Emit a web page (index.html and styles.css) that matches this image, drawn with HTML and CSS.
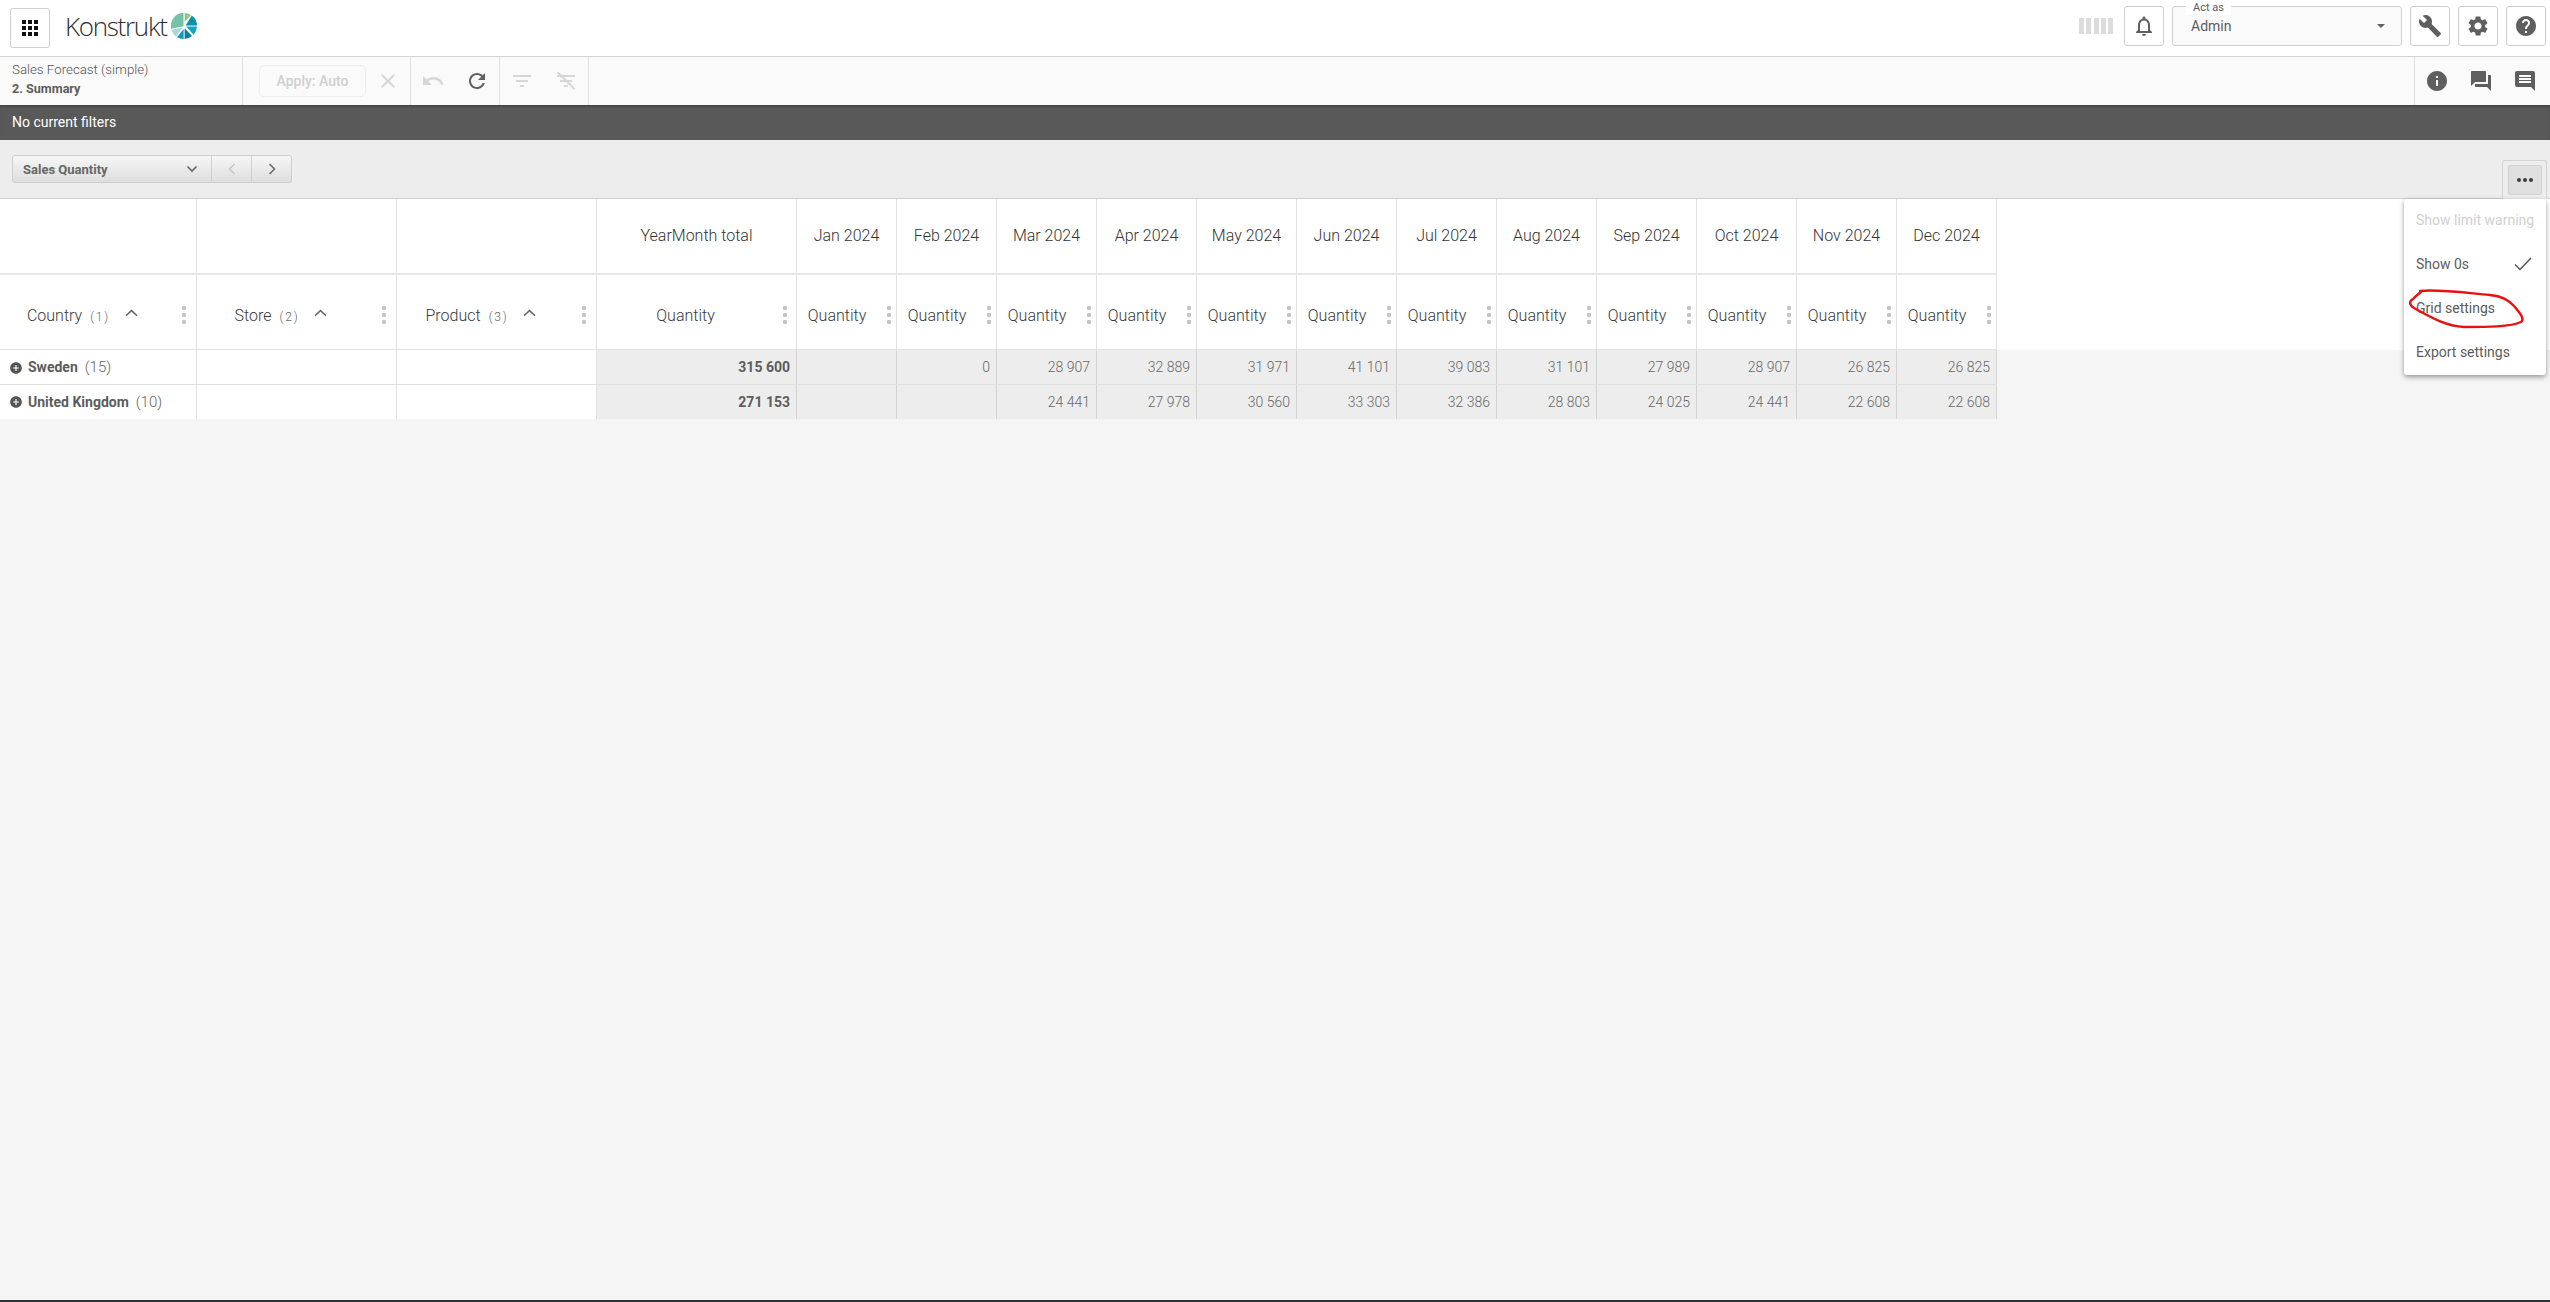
FILE: index.html
```html
<!DOCTYPE html>
<html lang="en">
<head>
<meta charset="utf-8">
<title>Konstrukt</title>
<link rel="stylesheet" href="styles.css">
</head>
<body>
<svg class="defs" aria-hidden="true">
  <symbol id="i-apps" viewBox="0 0 24 24"><path d="M4 8h4V4H4v4zm6 12h4v-4h-4v4zm-6 0h4v-4H4v4zm0-6h4v-4H4v4zm6 0h4v-4h-4v4zm6-10v4h4V4h-4zm-6 4h4V4h-4v4zm6 6h4v-4h-4v4zm0 6h4v-4h-4v4z"/></symbol>
  <symbol id="i-bell" viewBox="0 0 24 24"><path d="M12 22c1.1 0 2-.9 2-2h-4c0 1.1.9 2 2 2zm6-6v-5c0-3.07-1.63-5.64-4.5-6.32V4c0-.83-.67-1.5-1.5-1.5s-1.5.67-1.5 1.5v.68C7.64 5.36 6 7.92 6 11v5l-2 2v1h16v-1l-2-2zm-2 1H8v-6c0-2.48 1.51-4.5 4-4.5s4 2.02 4 4.5v6z"/></symbol>
  <symbol id="i-build" viewBox="0 0 24 24"><path d="M22.7 19l-9.1-9.1c.9-2.3.4-5-1.5-6.9-2-2-5-2.4-7.4-1.3L9 6 6 9 1.6 4.7C.4 7.1.9 10.1 2.9 12.1c1.9 1.9 4.6 2.4 6.9 1.5l9.1 9.1c.4.4 1 .4 1.4 0l2.3-2.3c.5-.4.5-1.1.1-1.4z"/></symbol>
  <symbol id="i-gear" viewBox="0 0 24 24"><path d="M19.14 12.94c.04-.3.06-.61.06-.94 0-.32-.02-.64-.07-.94l2.03-1.58c.18-.14.23-.41.12-.61l-1.92-3.32c-.12-.22-.37-.29-.59-.22l-2.39.96c-.5-.38-1.03-.7-1.62-.94l-.36-2.54c-.04-.24-.24-.41-.48-.41h-3.84c-.24 0-.43.17-.47.41l-.36 2.54c-.59.24-1.13.57-1.62.94l-2.39-.96c-.22-.08-.47 0-.59.22L2.74 8.87c-.12.21-.08.47.12.61l2.03 1.58c-.05.3-.09.63-.09.94s.02.64.07.94l-2.03 1.58c-.18.14-.23.41-.12.61l1.92 3.32c.12.22.37.29.59.22l2.39-.96c.5.38 1.03.7 1.62.94l.36 2.54c.05.24.24.41.48.41h3.84c.24 0 .44-.17.47-.41l.36-2.54c.59-.24 1.13-.56 1.62-.94l2.39.96c.22.08.47 0 .59-.22l1.92-3.32c.12-.22.07-.47-.12-.61l-2.01-1.58zM12 15.6c-1.98 0-3.6-1.62-3.6-3.6s1.62-3.6 3.6-3.6 3.6 1.62 3.6 3.6-1.62 3.6-3.6 3.6z"/></symbol>
  <symbol id="i-help" viewBox="0 0 24 24"><path d="M12 2C6.48 2 2 6.48 2 12s4.48 10 10 10 10-4.48 10-10S17.52 2 12 2zm1 17h-2v-2h2v2zm2.07-7.75l-.9.92C13.45 12.9 13 13.5 13 15h-2v-.5c0-1.1.45-2.1 1.17-2.83l1.24-1.26c.37-.36.59-.86.59-1.41 0-1.1-.9-2-2-2s-2 .9-2 2H8c0-2.21 1.79-4 4-4s4 1.79 4 4c0 .88-.36 1.68-.93 2.25z"/></symbol>
  <symbol id="i-info" viewBox="0 0 24 24"><path d="M12 2C6.48 2 2 6.48 2 12s4.48 10 10 10 10-4.48 10-10S17.52 2 12 2zm1 15h-2v-6h2v6zm0-8h-2V7h2v2z"/></symbol>
  <symbol id="i-forum" viewBox="0 0 24 24"><path d="M21 6h-2v9H6v2c0 .55.45 1 1 1h11l4 4V7c0-.55-.45-1-1-1zm-4 6V3c0-.55-.45-1-1-1H3c-.55 0-1 .45-1 1v14l4-4h10c.55 0 1-.45 1-1z"/></symbol>
  <symbol id="i-chat" viewBox="0 0 24 24"><path d="M21.99 4c0-1.1-.89-2-1.99-2H4c-1.1 0-2 .9-2 2v12c0 1.1.9 2 2 2h14l4 4-.01-18zM18 14H6v-2h12v2zm0-3H6V9h12v2zm0-3H6V6h12v2z"/></symbol>
  <symbol id="i-close" viewBox="0 0 24 24"><path d="M19 6.41L17.59 5 12 10.59 6.41 5 5 6.41 10.59 12 5 17.59 6.41 19 12 13.41 17.59 19 19 17.59 13.41 12z"/></symbol>
  <symbol id="i-undo" viewBox="0 0 24 24"><path d="M12.5 8c-2.65 0-5.05.99-6.9 2.6L2 7v9h9l-3.62-3.62c1.39-1.16 3.16-1.88 5.12-1.88 3.54 0 6.55 2.31 7.6 5.5l2.37-.78C21.08 11.03 17.15 8 12.5 8z"/></symbol>
  <symbol id="i-refresh" viewBox="0 0 24 24"><path d="M17.65 6.35C16.2 4.9 14.21 4 12 4c-4.42 0-7.99 3.58-7.99 8s3.57 8 7.99 8c3.73 0 6.84-2.55 7.73-6h-2.08c-.82 2.33-3.04 4-5.65 4-3.31 0-6-2.69-6-6s2.69-6 6-6c1.66 0 3.14.69 4.22 1.78L13 11h7V4l-2.35 2.35z"/></symbol>
  <symbol id="i-filter" viewBox="0 0 24 24"><path d="M10 18h4v-2h-4v2zM3 6v2h18V6H3zm3 7h12v-2H6v2z"/></symbol>
  <symbol id="i-filter-off" viewBox="0 0 24 24"><path d="M10 18h4v-2h-4v2zM3 6v2h18V6H3zm3 7h12v-2H6v2z"/><path d="M4.4 2.6l17 17-1.4 1.4-17-17z"/></symbol>
  <symbol id="i-plus" viewBox="0 0 24 24"><path d="M12 2C6.48 2 2 6.48 2 12s4.48 10 10 10 10-4.48 10-10S17.52 2 12 2zm5 11h-4v4h-2v-4H7v-2h4V7h2v4h4v2z"/></symbol>
  <symbol id="i-dots" viewBox="0 0 6 20"><circle cx="3" cy="3" r="2.2"/><circle cx="3" cy="10" r="2.2"/><circle cx="3" cy="17" r="2.2"/></symbol>
  <symbol id="i-up" viewBox="0 0 14 8"><path d="M1 7l6-5.6L13 7" fill="none" stroke="currentColor" stroke-width="1.6"/></symbol>
</svg>

<header class="topbar">
  <button class="square-btn apps-btn"><svg class="icon icon-black"><use href="#i-apps"/></svg></button>
  <div class="logo">
    <span class="logo-text">Konstrukt</span>
    <svg class="logo-pie" viewBox="0 0 26 26">
      <path fill="#74c3a9" d="M12.5 0A13 13 0 0 0 .1 15.8L12.5 13.2z"/>
      <path fill="#a9d9e0" d="M.4 16.8L11.8 14.6 5 23.6A13 13 0 0 1 .4 16.8z"/>
      <path fill="#8ccb7c" d="M13.6 0A13 13 0 0 1 20 2L13.6 9z"/>
      <path fill="#0e8ea8" d="M20.8 2.6A13 13 0 0 1 26 12.6H14.6z"/>
      <path fill="#12a8c4" d="M26 13.6A13 13 0 0 1 22.6 21.8L15.2 13.6z"/>
      <path fill="#0e7f98" d="M13.6 15.2L21 23A13 13 0 0 1 13.6 26z"/>
      <path fill="#1098b4" d="M12.6 16V26A13 13 0 0 1 6 24.2z"/>
    </svg>
  </div>
  <div class="top-right">
    <div class="bars"><i></i><i></i><i></i><i></i><i></i></div>
    <button class="square-btn"><svg class="icon"><use href="#i-bell"/></svg></button>
    <div class="act-as">
      <span class="act-legend">Act as</span>
      <span class="act-value">Admin</span>
      <span class="act-caret"></span>
    </div>
    <button class="square-btn"><svg class="icon"><use href="#i-build"/></svg></button>
    <button class="square-btn"><svg class="icon"><use href="#i-gear"/></svg></button>
    <button class="square-btn"><svg class="icon"><use href="#i-help"/></svg></button>
  </div>
</header>

<nav class="toolbar">
  <div class="tool-title">
    <div class="title-main">Sales Forecast (simple)</div>
    <div class="title-sub">2. Summary</div>
  </div>
  <div class="tool-group tool-apply">
    <button class="apply-btn">Apply: Auto</button>
    <svg class="icon icon-off"><use href="#i-close"/></svg>
  </div>
  <div class="tool-group">
    <svg class="icon icon-off"><use href="#i-undo"/></svg>
    <svg class="icon"><use href="#i-refresh"/></svg>
  </div>
  <div class="tool-group">
    <svg class="icon icon-off"><use href="#i-filter"/></svg>
    <svg class="icon icon-off"><use href="#i-filter-off"/></svg>
  </div>
  <div class="tool-group tool-end">
    <svg class="icon"><use href="#i-info"/></svg>
    <svg class="icon"><use href="#i-forum"/></svg>
    <svg class="icon"><use href="#i-chat"/></svg>
  </div>
</nav>

<div class="filterbar">No current filters</div>

<div class="band">
  <div class="pager">
    <div class="pager-select"><span>Sales Quantity</span><svg class="chev" viewBox="0 0 12 8"><path d="M1.5 1.5L6 6l4.5-4.5" fill="none" stroke="currentColor" stroke-width="1.6"/></svg></div>
    <div class="pager-btn pager-off"><svg class="chev-side" viewBox="0 0 8 12"><path d="M6.5 1L1.5 6l5 5" fill="none" stroke="currentColor" stroke-width="1.5"/></svg></div>
    <div class="pager-btn"><svg class="chev-side" viewBox="0 0 8 12"><path d="M1.5 1l5 5-5 5" fill="none" stroke="currentColor" stroke-width="1.5"/></svg></div>
  </div>
  <div class="more-box"><button class="more-btn"><i></i><i></i><i></i></button></div>
</div>

<main class="table-area">
  <div class="thead">
    <div class="tr tr-top">
      <div class="th dim"></div><div class="th"></div><div class="th"></div>
      <div class="th col-title">YearMonth total</div>
      <div class="th col-title">Jan 2024</div><div class="th col-title">Feb 2024</div><div class="th col-title">Mar 2024</div><div class="th col-title">Apr 2024</div>
      <div class="th col-title">May 2024</div><div class="th col-title">Jun 2024</div><div class="th col-title">Jul 2024</div><div class="th col-title">Aug 2024</div>
      <div class="th col-title">Sep 2024</div><div class="th col-title">Oct 2024</div><div class="th col-title">Nov 2024</div><div class="th col-title">Dec 2024</div>
    </div>
    <div class="tr tr-sub">
      <div class="th col-head"><span class="label dim-label">Country<small>(1)</small><svg class="sort"><use href="#i-up"/></svg></span><svg class="dots dots-dim"><use href="#i-dots"/></svg></div>
      <div class="th col-head"><span class="label dim-label">Store<small>(2)</small><svg class="sort"><use href="#i-up"/></svg></span><svg class="dots dots-dim"><use href="#i-dots"/></svg></div>
      <div class="th col-head"><span class="label dim-label">Product<small>(3)</small><svg class="sort"><use href="#i-up"/></svg></span><svg class="dots dots-dim"><use href="#i-dots"/></svg></div>
      <div class="th col-head"><span class="label">Quantity</span><svg class="dots dots-total"><use href="#i-dots"/></svg></div>
      <div class="th col-head"><span class="label month-label">Quantity</span><svg class="dots"><use href="#i-dots"/></svg></div>
      <div class="th col-head"><span class="label month-label">Quantity</span><svg class="dots"><use href="#i-dots"/></svg></div>
      <div class="th col-head"><span class="label month-label">Quantity</span><svg class="dots"><use href="#i-dots"/></svg></div>
      <div class="th col-head"><span class="label month-label">Quantity</span><svg class="dots"><use href="#i-dots"/></svg></div>
      <div class="th col-head"><span class="label month-label">Quantity</span><svg class="dots"><use href="#i-dots"/></svg></div>
      <div class="th col-head"><span class="label month-label">Quantity</span><svg class="dots"><use href="#i-dots"/></svg></div>
      <div class="th col-head"><span class="label month-label">Quantity</span><svg class="dots"><use href="#i-dots"/></svg></div>
      <div class="th col-head"><span class="label month-label">Quantity</span><svg class="dots"><use href="#i-dots"/></svg></div>
      <div class="th col-head"><span class="label month-label">Quantity</span><svg class="dots"><use href="#i-dots"/></svg></div>
      <div class="th col-head"><span class="label month-label">Quantity</span><svg class="dots"><use href="#i-dots"/></svg></div>
      <div class="th col-head"><span class="label month-label">Quantity</span><svg class="dots"><use href="#i-dots"/></svg></div>
      <div class="th col-head"><span class="label month-label">Quantity</span><svg class="dots"><use href="#i-dots"/></svg></div>
    </div>
  </div>
  <div class="tbody">
    <div class="tr tr-data">
      <div class="td td-dim"><svg class="plus"><use href="#i-plus"/></svg><b>Sweden</b><span class="n">(15)</span></div><div class="td td-dim"></div><div class="td td-dim"></div>
      <div class="td td-total">315 600</div><div class="td"></div><div class="td">0</div><div class="td">28 907</div><div class="td">32 889</div><div class="td">31 971</div><div class="td">41 101</div><div class="td">39 083</div><div class="td">31 101</div><div class="td">27 989</div><div class="td">28 907</div><div class="td">26 825</div><div class="td">26 825</div>
    </div>
    <div class="tr tr-data tr-last">
      <div class="td td-dim"><svg class="plus"><use href="#i-plus"/></svg><b>United Kingdom</b><span class="n">(10)</span></div><div class="td td-dim"></div><div class="td td-dim"></div>
      <div class="td td-total">271 153</div><div class="td"></div><div class="td"></div><div class="td">24 441</div><div class="td">27 978</div><div class="td">30 560</div><div class="td">33 303</div><div class="td">32 386</div><div class="td">28 803</div><div class="td">24 025</div><div class="td">24 441</div><div class="td">22 608</div><div class="td">22 608</div>
    </div>
  </div>

  <ul class="menu">
    <li class="menu-off">Show limit warning</li>
    <li class="menu-check">Show 0s<svg class="check" viewBox="0 0 18 14"><path d="M1 7.5l5 5L17 1" fill="none" stroke="currentColor" stroke-width="1.5"/></svg></li>
    <li>Grid settings</li>
    <li>Export settings</li>
  </ul>
  <svg class="scribble" viewBox="0 0 120 50"><path d="M14 3C30 1 52 4 84 7C96 8 102 12 108 18C114 25 119 31 115 34C105 39 80 39 58 39C40 38 26 30 8 20C3 17 3 13 7 11C10 8 12 6 15 4" fill="none" stroke="#e81010" stroke-width="2.4" stroke-linecap="round"/></svg>
</main>

<footer class="edge"></footer>
</body>
</html>
```

FILE: styles.css
```css
* { box-sizing: border-box; }
html, body { height: 100%; }
body {
  margin: 0;
  display: flex;
  flex-direction: column;
  height: 100vh;
  overflow: hidden;
  background: #f5f5f5;
  color: #5c5c5c;
  font-family: Roboto, "Liberation Sans", sans-serif;
  font-size: 13px;
}
button { font-family: inherit; padding: 0; }
.defs { position: absolute; width: 0; height: 0; }
.icon { width: 24px; height: 24px; fill: #5f5f5f; flex: none; display: block; }
.icon-black { fill: #111; }
.icon-off { fill: #d6d6d6; }

/* top bar */
.topbar {
  height: 57px;
  flex: none;
  display: flex;
  align-items: flex-start;
  padding: 6px 4px 0 10px;
  background: #fff;
  border-bottom: 1px solid #d2d2d2;
}
.square-btn {
  width: 40px;
  height: 40px;
  display: flex;
  align-items: center;
  justify-content: center;
  background: #fff;
  border: 1px solid #d0d0d0;
  border-radius: 3px;
}
.apps-btn { margin-top: 2px; }
.logo { display: flex; align-items: center; gap: 4px; margin: 7px 0 0 15px; height: 26px; }
.logo-text {
  font-family: "Open Sans", sans-serif;
  font-weight: 300;
  font-size: 26px;
  line-height: 26px;
  letter-spacing: -1.3px;
  color: #2e2e2e;
}
.logo-pie { width: 26px; height: 26px; display: block; }
.top-right { margin-left: auto; display: flex; align-items: flex-start; gap: 8px; }
.bars { display: flex; gap: 2.25px; margin: 12px 3px 0 0; }
.bars i { width: 5px; height: 16px; background: #dcdcdc; display: block; }
.act-as {
  position: relative;
  width: 230px;
  height: 40px;
  display: flex;
  align-items: center;
  justify-content: space-between;
  padding: 0 16px 0 18px;
  background: #fafafa;
  border: 1px solid #d0d0d0;
  border-radius: 3px;
}
.act-legend {
  position: absolute;
  left: 13px;
  top: -6px;
  padding: 0 7px 0 7px;
  height: 14px;
  line-height: 14px;
  font-size: 11px;
  background: #fff;
  color: #5c5c5c;
}
.act-value { font-size: 14px; color: #5c5c5c; }
.act-caret {
  width: 0;
  height: 0;
  border-left: 4px solid transparent;
  border-right: 4px solid transparent;
  border-top: 4px solid #5f5f5f;
}

/* tool bar */
.toolbar {
  height: 48px;
  flex: none;
  display: flex;
  background: #fafafa;
}
.tool-title {
  width: 243px;
  padding: 3px 0 0 12px;
  border-right: 1px solid #e0e0e0;
  line-height: 19px;
  font-size: 13.3px;
  font-weight: 300;
  color: #555;
}
.title-sub { font-weight: 700; color: #5c5c5c; font-size: 12.6px; }
.tool-group {
  display: flex;
  align-items: center;
  gap: 20px;
  padding: 0 10px;
  border-right: 1px solid #e0e0e0;
}
.tool-apply { padding: 0 10px 0 16px; gap: 10px; }
.tool-end { margin-left: auto; border-right: 0; border-left: 1px solid #e0e0e0; padding: 0 13px 0 10px; }
.apply-btn {
  width: 107px;
  height: 32px;
  background: #fafafa;
  border: 1px solid #eee;
  border-radius: 5px;
  font-size: 14px;
  font-weight: 500;
  color: #cfcfcf;
}

/* filter strip */
.filterbar {
  height: 35px;
  flex: none;
  display: flex;
  align-items: center;
  padding: 0 0 2px 12px;
  background: #595959;
  box-shadow: inset 0 3px 3px -2px rgba(0, 0, 0, .35);
  color: #fff;
  font-size: 14px;
}

/* grid controls */
.band {
  height: 59px;
  flex: none;
  display: flex;
  justify-content: space-between;
  padding: 15px 3px 0 12px;
  background: #ededed;
  border-bottom: 1px solid #cfcfcf;
}
.pager { display: flex; height: 28px; }
.pager-select, .pager-btn {
  display: flex;
  align-items: center;
  background: linear-gradient(#f6f6f6, #dedede);
  border: 1px solid #cfcfcf;
  color: #666;
}
.pager-select {
  width: 200px;
  justify-content: space-between;
  padding: 0 13px 0 10px;
  border-radius: 3px 0 0 3px;
  font-size: 13px;
  font-weight: 700;
}
.chev { width: 12px; height: 8px; }
.pager-btn { width: 40px; justify-content: center; border-left: 0; }
.pager-btn:last-child { border-radius: 0 3px 3px 0; }
.pager-off { color: #c4c4c4; }
.chev-side { width: 8px; height: 12px; }
.more-box {
  width: 45px;
  height: 39px;
  margin-top: 5px;
  padding: 4px 0 0 5px;
  background: #ededed;
  border: 1px solid #d4d4d4;
  border-bottom: 0;
  border-radius: 3px 3px 0 0;
}
.more-btn {
  width: 34px;
  height: 30px;
  display: flex;
  align-items: center;
  justify-content: center;
  gap: 2px;
  background: #e0e0e0;
  border: 1px solid #d2d2d2;
  border-radius: 2px;
}
.more-btn i { width: 4px; height: 4px; border-radius: 50%; background: #3b3b3b; }

/* table */
.table-area { position: relative; flex: 1; }
.thead { background: #fff; }
.tr {
  display: grid;
  grid-template-columns: 197px 200px 200px 200px repeat(12, 100px);
  width: 1997px;
}
.th { border-right: 1px solid #e2e2e2; }
.tr-top { height: 76px; border-bottom: 2px solid #e6e6e6; }
.tr-sub { height: 75px; border-bottom: 1px solid #e2e2e2; }
.col-title {
  display: flex;
  align-items: center;
  justify-content: center;
  font-size: 16px;
  color: #333;
  font-weight: 300;
  padding-bottom: 2px;
}
.col-head { display: flex; align-items: center; padding-top: 6px; }
.label {
  flex: 1;
  min-width: 0;
  display: flex;
  align-items: center;
  justify-content: center;
  font-size: 16px;
  font-weight: 300;
  color: #3a3a3a;
}
.dim-label { padding-right: 7px; }
.month-label { padding-right: 5px; }
.label small {
  font-size: 12px;
  letter-spacing: 1.8px;
  margin: 3px 0 0 8px;
  color: #666;
}
.sort { width: 13px; height: 8px; margin: -4px 0 0 15px; color: #666; }
.dots { width: 14px; height: 20px; flex: none; fill: #c4c4c4; }
.dots-dim { width: 24px; }
.dots-total { width: 22px; }
.tr-data { height: 35px; border-bottom: 1px solid #e0e0e0; }
.tr-last { height: 34px; border-bottom: 0; }
.td {
  display: flex;
  align-items: center;
  justify-content: flex-end;
  padding-right: 6px;
  background: #ededed;
  border-right: 1px solid #d4d4d4;
  color: #666;
  font-size: 14px;
  font-weight: 300;
}
.td-dim {
  justify-content: flex-start;
  padding: 0 0 0 10px;
  background: #fff;
  border-right-color: #e2e2e2;
  font-size: 15px;
}
.tr-last .td-dim { padding-bottom: 1px; }
.td-dim b { font-weight: 700; color: #5c5c5c; font-size: 14px; }
.n { margin-left: 7px; color: #666; }
.plus { width: 14px; height: 14px; margin: 1px 5px 0 -1px; fill: #555; flex: none; }
.td-total { font-weight: 700; color: #5c5c5c; }

/* overlay menu */
.menu {
  position: absolute;
  top: 0;
  right: 4px;
  width: 142px;
  height: 176px;
  margin: 0;
  padding: 0;
  list-style: none;
  background: #fff;
  border-radius: 3px;
  box-shadow: 0 2px 5px rgba(0, 0, 0, .4);
}
.menu li {
  height: 44px;
  display: flex;
  align-items: center;
  justify-content: space-between;
  padding: 0 14px 2px 12px;
  font-size: 14px;
  color: #5c5c5c;
}
.menu .menu-off { color: #cfcfcf; white-space: nowrap; padding-right: 0; }
.check { width: 18px; height: 14px; color: #555; }
.scribble { position: absolute; top: 89px; left: 2406px; width: 120px; height: 50px; }

.edge { height: 2px; flex: none; background: #263238; }
```
